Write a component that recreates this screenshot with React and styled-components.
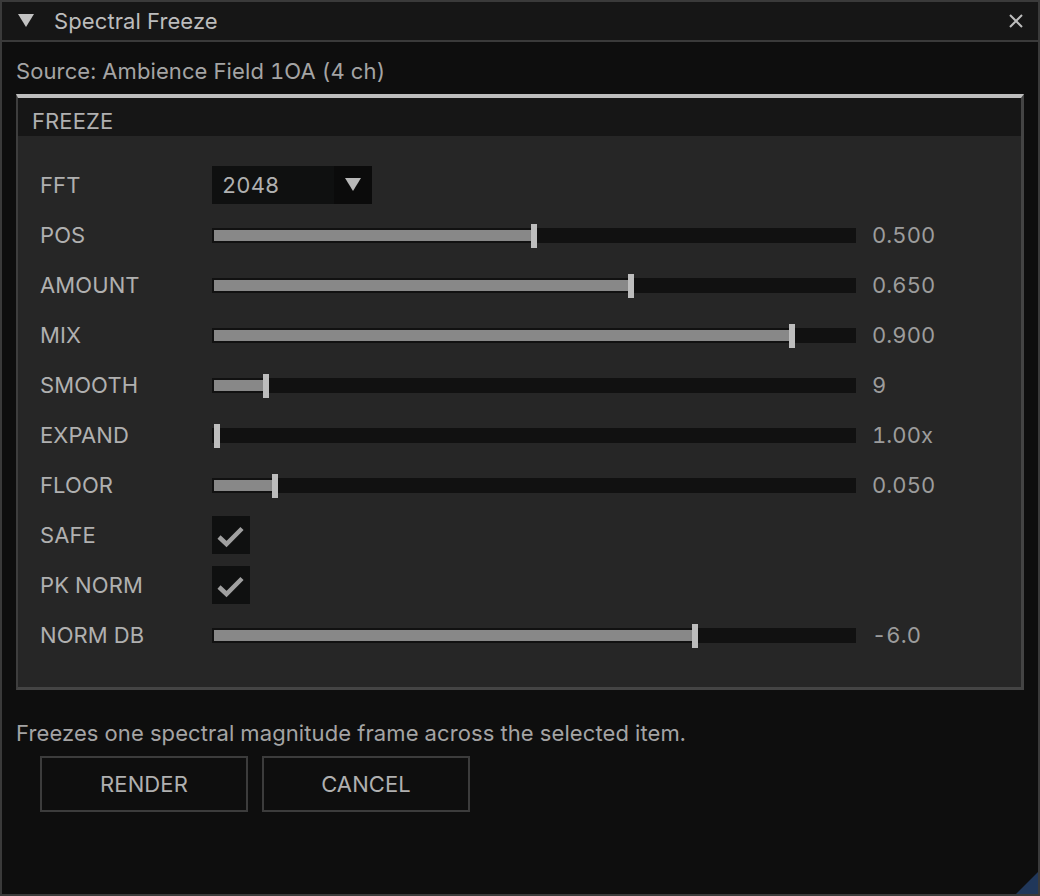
import React from "react";
import styled, { createGlobalStyle } from "styled-components";

const GlobalStyle = createGlobalStyle`
  html, body {
    margin: 0;
    padding: 0;
    background: #0e0e0e;
  }
  * {
    box-sizing: border-box;
  }
`;

const Window = styled.div`
  position: relative;
  width: 1040px;
  height: 896px;
  background: #0e0e0e;
  border: 2px solid #3a3a3a;
  font-family: Inter, "Noto Sans", sans-serif;
  font-size: 22px;
  letter-spacing: 0.1px;
  font-variant-numeric: tabular-nums;
  color: #b0b0b0;
  display: flex;
  flex-direction: column;
`;

const TitleBar = styled.div`
  height: 40px;
  flex: none;
  background: #161616;
  border-bottom: 2px solid #3a3a3a;
  display: flex;
  align-items: center;
  padding: 0 16px 0 16px;
  gap: 20px;
`;

const TitleText = styled.span`
  flex: 1;
  color: #bcbcbc;
  line-height: 22px;
`;

const CloseButton = styled.span`
  display: flex;
  align-items: center;
  justify-content: center;
  width: 20px;
  height: 20px;
  margin-right: -4px;
`;

const Body = styled.div`
  flex: 1;
  padding: 18px 14px 0 14px;
  display: flex;
  flex-direction: column;
`;

const SourceText = styled.div`
  line-height: 22px;
  color: #a4a4a4;
`;

const Frame = styled.div`
  margin-top: 12px;
  border-top: 4px solid #bdbdbd;
  border-left: 2px solid #3e3e3e;
  border-right: 3px solid #444;
  border-bottom: 3px solid #444;
  background: #262626;
`;

const FrameHeader = styled.div`
  height: 38px;
  background: #161616;
  display: flex;
  align-items: center;
  padding: 7px 0 0 14px;
  color: #b0b0b0;
`;

const FrameContent = styled.div`
  padding: 24px 0 27px 22px;
  display: flex;
  flex-direction: column;
`;

const Row = styled.div`
  height: 50px;
  display: grid;
  grid-template-columns: 156px 644px auto;
  column-gap: 16px;
  align-items: center;
`;

const Label = styled.span`
  color: #b0b0b0;
  line-height: 22px;
`;

const Value = styled.span`
  color: #9c9c9c;
  line-height: 22px;
`;

const Combo = styled.div`
  width: 160px;
  height: 38px;
  background: #0f1010;
  display: flex;
  align-items: stretch;
`;

const ComboText = styled.span`
  flex: 1;
  display: flex;
  align-items: center;
  padding-left: 10px;
  color: #b0b0b0;
`;

const ComboArrow = styled.span`
  width: 38px;
  background: #0b0b0b;
  display: flex;
  align-items: center;
  justify-content: center;
`;

const Track = styled.div`
  position: relative;
  height: 15px;
  background: #111;
  padding: 2px;
  display: flex;
`;

const Fill = styled.div`
  height: 100%;
  background: #888888;
`;

const Grab = styled.div`
  position: absolute;
  top: -4px;
  width: 6px;
  height: 24px;
  background: #bdbdbd;
`;

const CheckBox = styled.div`
  width: 38px;
  height: 38px;
  background: #0f1010;
  display: flex;
  align-items: center;
  justify-content: center;
`;

const Description = styled.div`
  margin-top: 32px;
  line-height: 22px;
  color: #a4a4a4;
`;

const ButtonRow = styled.div`
  margin-top: 12px;
  padding-left: 24px;
  display: flex;
  gap: 14px;
`;

const Button = styled.div`
  width: 208px;
  height: 56px;
  border: 2px solid #3c3c3c;
  background: #0e0e0e;
  display: flex;
  align-items: center;
  justify-content: center;
  color: #b0b0b0;
`;

const ResizeGrip = styled.svg`
  position: absolute;
  right: 0;
  bottom: 0;
`;

const Triangle = ({ size = 16, color = "#c0c0c0" }) => (
  <svg width={size} height={size * 0.82} viewBox="0 0 16 13">
    <polygon points="0,0 16,0 8,13" fill={color} />
  </svg>
);

const Slider = ({ frac }) => {
  const inner = 640;
  const grabLeft = 2 + frac * (inner - 6);
  return (
    <Track>
      <Fill style={{ width: grabLeft - 2 }} />
      <Grab style={{ left: grabLeft }} />
    </Track>
  );
};

const Check = () => (
  <CheckBox>
    <svg width="38" height="38" viewBox="0 0 38 38">
      <polyline
        points="7,21 14.5,28 30,12.5"
        fill="none"
        stroke="#a0a0a0"
        strokeWidth="4.5"
      />
    </svg>
  </CheckBox>
);

const sliders = [
  { label: "POS", frac: 0.5, value: "0.500" },
  { label: "AMOUNT", frac: 0.653, value: "0.650" },
  { label: "MIX", frac: 0.907, value: "0.900" },
  { label: "SMOOTH", frac: 0.077, value: "9" },
  { label: "EXPAND", frac: 0, value: "1.00x" },
  { label: "FLOOR", frac: 0.0915, value: "0.050" },
];

const App = () => {
  return (
    <>
      <GlobalStyle />
      <Window>
        <TitleBar>
          <Triangle size={16} color="#c2c2c2" />
          <TitleText>Spectral Freeze</TitleText>
          <CloseButton>
            <svg width="16" height="16" viewBox="0 0 16 16">
              <path d="M2 2 L14 14 M14 2 L2 14" stroke="#bdbdbd" strokeWidth="2" />
            </svg>
          </CloseButton>
        </TitleBar>

        <Body>
          <SourceText>Source: Ambience Field 1OA (4 ch)</SourceText>

          <Frame>
            <FrameHeader>FREEZE</FrameHeader>
            <FrameContent>
              <Row>
                <Label>FFT</Label>
                <Combo>
                  <ComboText>2048</ComboText>
                  <ComboArrow>
                    <Triangle size={16} color="#b8b8b8" />
                  </ComboArrow>
                </Combo>
              </Row>

              {sliders.map((s) => (
                <Row key={s.label}>
                  <Label>{s.label}</Label>
                  <Slider frac={s.frac} />
                  <Value>{s.value}</Value>
                </Row>
              ))}

              <Row>
                <Label>SAFE</Label>
                <Check />
              </Row>
              <Row>
                <Label>PK NORM</Label>
                <Check />
              </Row>
              <Row>
                <Label>NORM DB</Label>
                <Slider frac={0.754} />
                <Value>-6.0</Value>
              </Row>
            </FrameContent>
          </Frame>

          <Description>
            Freezes one spectral magnitude frame across the selected item.
          </Description>

          <ButtonRow>
            <Button>RENDER</Button>
            <Button>CANCEL</Button>
          </ButtonRow>
        </Body>

        <ResizeGrip width="22" height="22" viewBox="0 0 22 22">
          <polygon points="22,0 22,22 0,22" fill="#20375a" />
        </ResizeGrip>
      </Window>
    </>
  );
};

export default App;
